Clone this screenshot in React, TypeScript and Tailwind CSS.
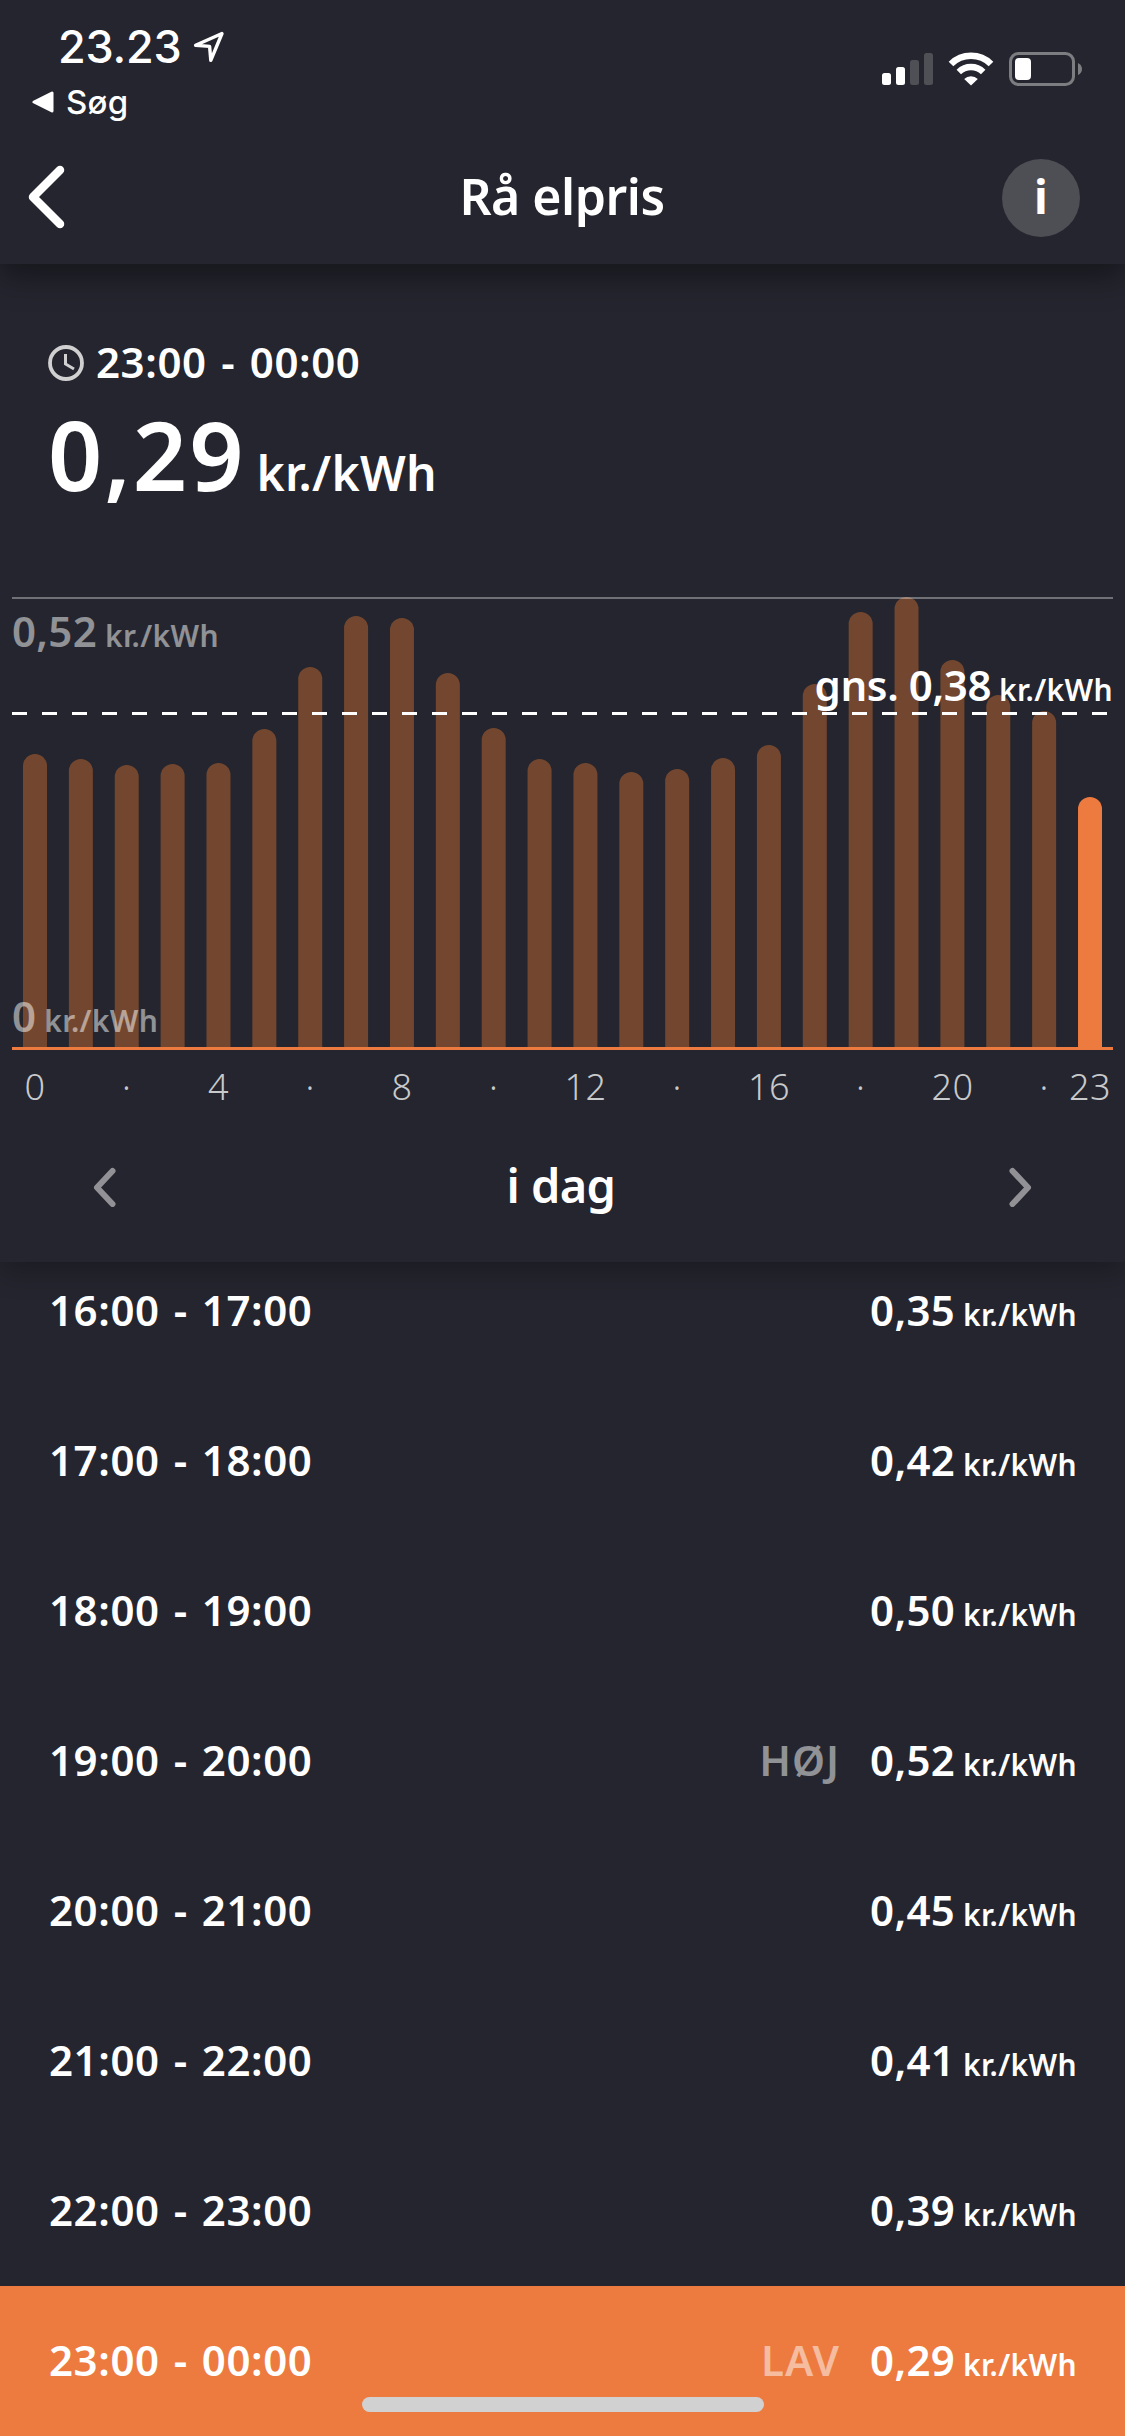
import React from 'react';

// Bar heights in px, one for each hour of the day (0 - 23)
const bars = [
  293, 288, 282, 283, 284, 318, 380, 431, 429, 374, 319, 288,
  284, 275, 278, 289, 302, 363, 435, 450, 387, 352, 336, 250,
];

const rows = [
  { time: '16:00 - 17:00', price: '0,35' },
  { time: '17:00 - 18:00', price: '0,42' },
  { time: '18:00 - 19:00', price: '0,50' },
  { time: '19:00 - 20:00', price: '0,52', tag: 'HØJ' },
  { time: '20:00 - 21:00', price: '0,45' },
  { time: '21:00 - 22:00', price: '0,41' },
  { time: '22:00 - 23:00', price: '0,39' },
  { time: '23:00 - 00:00', price: '0,29', tag: 'LAV' },
];

const CURRENT_HOUR = 23;
const CHART_HEIGHT = 453;
const BAR_STEP = 45.87;

const hourLabel = (hour: number) => {
  if (hour === 23 || hour % 4 === 0) return String(hour);
  return hour % 2 === 0 ? '·' : '';
};

/** Price with its smaller unit behind it */
const Price = ({ children }: { children: React.ReactNode }) => (
  <div className="whitespace-nowrap text-[42px] leading-[42px] tracking-[0.3px]">
    {children}
    <span className="ml-[8px] text-[30px] leading-none tracking-[0.35px]">kr./kWh</span>
  </div>
);

const StatusBar = () => (
  <div className="flex h-[132px] justify-between font-['Inter',sans-serif]">
    <div>
      <div className="flex items-center pl-[58px] pt-[24px]">
        <span className="text-[45px] font-medium leading-[46px] tracking-[-0.2px]">23.23</span>
        <svg className="ml-[11px]" width="32" height="32" viewBox="0 0 32 32" fill="none">
          <path
            d="M29 2.5 L2.6 14.2 L16.6 15.4 L17.8 29.4 Z"
            stroke="white"
            strokeWidth="3.4"
            strokeLinejoin="round"
          />
        </svg>
      </div>
      <div className="flex items-center pl-8 pt-[9px]">
        <svg width="22" height="22" viewBox="0 0 22 22">
          <path d="M2 11 L20 2 V20 Z" fill="white" stroke="white" strokeWidth="3" strokeLinejoin="round" />
        </svg>
        <span className="ml-3 text-[33px] font-medium leading-[46px] tracking-[0.3px]">Søg</span>
      </div>
    </div>
    <div className="mt-[52px] flex h-[34px] items-start pr-[43px]">
      <svg width="51" height="33" viewBox="0 0 51 33">
        <rect x="0" y="21" width="9" height="12" rx="2.5" fill="white" />
        <rect x="14" y="15" width="9" height="18" rx="2.5" fill="white" />
        <rect x="28" y="8" width="9" height="25" rx="2.5" fill="#4f5055" />
        <rect x="42" y="1" width="9" height="32" rx="2.5" fill="#4f5055" />
      </svg>
      <svg className="ml-[15px]" width="46" height="34" viewBox="0 0 46 34">
        <path d="M3 12 A 28.5 28.5 0 0 1 43 12" fill="none" stroke="white" strokeWidth="6.6" />
        <path d="M10.8 20 A 17.5 17.5 0 0 1 35.2 20" fill="none" stroke="white" strokeWidth="6.4" />
        <path d="M16.2 27 A 9.8 9.8 0 0 1 29.8 27 L23 33.6 Z" fill="white" />
      </svg>
      <svg className="ml-[15px]" width="73" height="34" viewBox="0 0 73 34">
        <rect x="1.5" y="1.5" width="63" height="31" rx="8" fill="none" stroke="#7c7d81" strokeWidth="3" />
        <rect x="6" y="6" width="16" height="22" rx="4" fill="white" />
        <path d="M69 11 Q73 13 73 17 Q73 21 69 23 Z" fill="#7c7d81" />
      </svg>
    </div>
  </div>
);

const NavBar = () => (
  <div className="flex h-[132px] items-center justify-between pl-7 pr-[45px]">
    <button className="w-[78px] pb-[3px]">
      <svg width="38" height="64" viewBox="0 0 38 64" fill="none">
        <path d="M32 5 L5 32 L32 59" stroke="white" strokeWidth="8.5" strokeLinecap="round" strokeLinejoin="round" />
      </svg>
    </button>
    <h1 className="pb-[5px] pl-4 text-[50px] leading-none tracking-[-0.5px]">Rå elpris</h1>
    <button className="h-[78px] w-[78px] rounded-full bg-[#4e4f54] pb-1 text-[46px] font-bold leading-none">i</button>
  </div>
);

const Chart = () => (
  <div className="relative mt-[95px]">
    <svg className="block" width="1125" height={CHART_HEIGHT} viewBox={`0 0 1125 ${CHART_HEIGHT}`}>
      {bars.map((height, hour) => {
        const x = 23 + hour * BAR_STEP;
        const top = CHART_HEIGHT - 3 - height;
        return (
          <path
            key={hour}
            d={`M${x} 450 V${top + 12} a12 12 0 0 1 24 0 V450 Z`}
            fill={hour === CURRENT_HOUR ? '#ed7a3f' : '#73472f'}
          />
        );
      })}
      <rect x="12" y="0" width="1101" height="2" fill="white" fillOpacity="0.35" />
      <line x1="12" y1="116.5" x2="1113" y2="116.5" stroke="white" strokeWidth="3" strokeDasharray="15 15" />
      <rect x="12" y="450" width="1101" height="3" fill="#ed7a3f" />
    </svg>
    <div className="absolute left-3 top-[13px] text-white/50">
      <Price>0,52</Price>
    </div>
    <div className="absolute right-3 top-[67px]">
      <Price><span className="tracking-[-0.4px]">gns. 0,38</span></Price>
    </div>
    <div className="absolute left-3 top-[398px] text-white/50">
      <Price>0</Price>
    </div>
  </div>
);

const HourAxis = () => (
  <div className="mt-[19px] grid grid-cols-[repeat(24,minmax(0,1fr))] px-3 text-[36px] font-light leading-9 tracking-[0.5px] text-[#c8c9cb]">
    {bars.map((_, hour) => (
      <span key={hour} className="flex justify-center">{hourLabel(hour)}</span>
    ))}
  </div>
);

const DaySelector = () => (
  <div className="mt-[6px] flex h-[152px] items-center justify-between px-[93px]">
    <svg width="23" height="40" viewBox="0 0 23 40" fill="none">
      <path d="M19.5 4 L4 20.5 L19.5 37" stroke="#929296" strokeWidth="6" strokeLinecap="round" strokeLinejoin="round" />
    </svg>
    <span className="pb-[3px] pr-[3px] text-[47px] leading-none tracking-[-0.6px]">i dag</span>
    <svg width="23" height="40" viewBox="0 0 23 40" fill="none">
      <path d="M3.5 4 L19 20.5 L3.5 37" stroke="#929296" strokeWidth="6" strokeLinecap="round" strokeLinejoin="round" />
    </svg>
  </div>
);

const App = () => {
  return (
    <div className="relative flex h-[2436px] w-[1125px] flex-col overflow-hidden bg-[#24252e] font-['Noto_Sans',sans-serif] font-semibold text-white">
      <header className="z-20 bg-[#24252e] shadow-[0_12px_30px_rgba(0,0,0,0.4)]">
        <StatusBar />
        <NavBar />
      </header>

      <section className="z-10 h-[998px] bg-[#24252e] pt-[78px] shadow-[0_12px_24px_rgba(0,0,0,0.22)]">
        <div className="flex items-center pl-12">
          <svg width="36" height="36" viewBox="0 0 36 36" fill="none" stroke="#d0d0d1">
            <circle cx="18" cy="18" r="16" strokeWidth="3.8" />
            <path d="M17.5 9 V19 L26 24" strokeWidth="3" />
          </svg>
          <span className="ml-3 pb-[3px] text-[42px] leading-[39px] tracking-[0.6px] [word-spacing:3px]">23:00 - 00:00</span>
        </div>
        <div className="mt-[23px] pl-12 text-[95px] leading-[95px] tracking-[2px]">
          0,29
          <span className="ml-[11px] text-[48px] leading-none tracking-[0.3px]">kr./kWh</span>
        </div>
        <Chart />
        <HourAxis />
        <DaySelector />
      </section>

      <ul className="flex flex-1 flex-col justify-end overflow-hidden">
        {rows.map((row, index) => (
          <li
            key={row.time}
            className={`flex h-[150px] shrink-0 items-center justify-between pb-0.5 pl-[49px] pr-12 ${index === rows.length - 1 ? 'bg-[#ed7a3f]' : ''}`}
          >
            <span className="text-[42px] leading-[42px] tracking-[0.6px] [word-spacing:2.5px]">{row.time}</span>
            <div className="flex items-center">
              {row.tag && (
                <span className="mr-[30px] text-[42px] leading-[42px] tracking-[1px] text-white/50">{row.tag}</span>
              )}
              <Price>{row.price}</Price>
            </div>
          </li>
        ))}
      </ul>

      {/* Home indicator */}
      <div className="absolute bottom-6 left-[362px] z-30 h-[15px] w-[402px] rounded-full bg-[#d1d1d1]" />
    </div>
  );
};

export default App;
